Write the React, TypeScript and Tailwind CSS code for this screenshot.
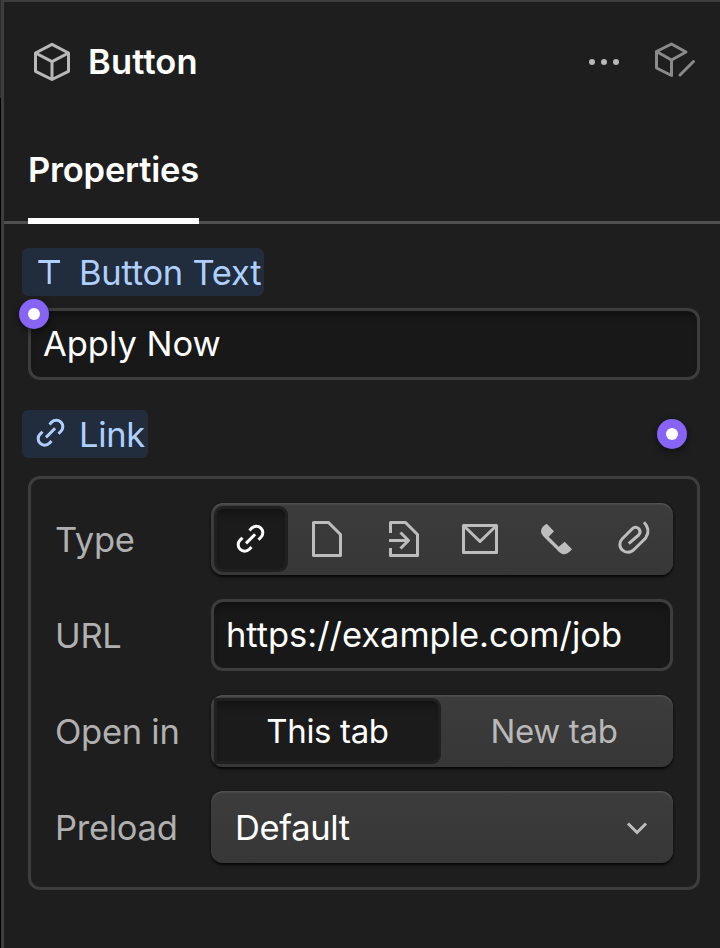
import type { ReactNode } from "react";

const controlClass =
    "h-[72px] w-[462px] rounded-[12px] bg-linear-to-b from-[#3c3c3c] to-[#373737] shadow-[0_1.5px_3px_rgba(0,0,0,0.8),inset_0_1.5px_1.5px_rgba(255,255,255,0.12)]";
const inputClass =
    "block h-[72px] rounded-[12px] border-[3px] border-[#3d3d3d] bg-[#181818] px-3 pb-0.5 tracking-[-0.001em] text-white outline-none shadow-[inset_0_9px_9px_-6px_rgba(0,0,0,0.4)]";
const pressedClass =
    "h-[66px] border-[3px] border-[#202020] bg-[#1b1b1b] text-white shadow-[inset_0_9px_9px_-6px_rgba(0,0,0,0.4)]";

function LinkIcon({ className = "" }: { className?: string }) {
    return (
        <svg className={className} width="29" height="29" viewBox="0 0 29 29" fill="none" stroke="currentColor" strokeWidth="3">
            <path d="M13.5 6.5 15.7 4.1A6.5 6.5 0 0 1 24.9 13.3L22.5 15.7M15.5 22.9 13.3 25.3A6.5 6.5 0 0 1 4.1 16.1L6.5 13.7M10 19.4 19.1 10.3" />
        </svg>
    );
}

function TypeIcon({ children }: { children: ReactNode }) {
    return (
        <button className="flex h-[72px] w-[76px] items-center justify-center">
            <svg width="48" height="48" viewBox="0 0 48 48" fill="none" stroke="currentColor" strokeWidth="3" strokeLinejoin="round">
                {children}
            </svg>
        </button>
    );
}

// 紫のバインディングマーカー
function BindingDot({ className = "" }: { className?: string }) {
    return (
        <span className={`flex size-[30px] items-center justify-center rounded-full bg-[#8764f5] shadow-[0_3px_6px_1px_rgba(0,0,0,0.4)] ${className}`}>
            <span className="size-3 rounded-full bg-white" />
        </span>
    );
}

function Row({ label, children }: { label: string; children: ReactNode }) {
    return (
        <div className="flex items-center">
            <span className="w-[156px] shrink-0 pt-0.5 tracking-[-0.008em]">{label}</span>
            {children}
        </div>
    );
}

export default function App() {
    return (
        <div className="h-[948px] w-[720px] overflow-hidden bg-linear-to-b from-[#2b2b2b] from-[98px] to-black to-[98px] pl-px font-['Inter','Liberation_Sans',sans-serif] text-[34.5px] leading-[48px] tracking-[-0.01em] text-[#b0b0b0]">
            <div className="h-full border-t-2 border-l-[3px] border-[#3d3d3d] bg-[#1e1e1e]">

                {/* ヘッダー */}
                <header className="flex h-[120px] items-center pr-[22px] pl-6">
                    <svg width="48" height="48" viewBox="0 0 48 48" fill="none" stroke="#b8b8b8" strokeWidth="3" strokeLinejoin="round">
                        <path d="M24 6.3 40.5 15V33.3L24 41.5 7.5 33.3V15ZM7.5 15 24 23.7 40.5 15M24 23.7V41.5" />
                    </svg>
                    <h1 className="ml-3 font-semibold tracking-[0.004em] text-white">Button</h1>
                    <svg className="ml-auto" width="36" height="12" viewBox="0 0 36 12" fill="#b8b8b8">
                        <circle cx="6" cy="6" r="3" />
                        <circle cx="18" cy="6" r="3" />
                        <circle cx="30" cy="6" r="3" />
                    </svg>
                    <svg className="ml-7" width="48" height="48" viewBox="0 0 48 48" fill="none" stroke="#8a8a8a" strokeWidth="3" strokeLinejoin="round" strokeLinecap="round">
                        <path d="M21.5 37.5 6.5 30V13.5L21.5 6 36 14 21.5 22ZM6.5 13.5 21.5 22M30 37 43.5 23.5" />
                    </svg>
                </header>

                {/* タブ */}
                <nav className="flex h-[102px] border-b-[3px] border-[#505050] pl-6">
                    <button className="h-[102px] w-[171px] border-b-[6px] border-white text-left font-semibold tracking-[-0.006em] whitespace-nowrap text-white">
                        Properties
                    </button>
                </nav>

                <main className="pt-6 pr-5 pl-6">
                    <div className="-ml-1.5 flex h-12 w-[242px] items-center rounded-md bg-[#212d3c] pl-3.5 tracking-[-0.007em] whitespace-nowrap text-[#aecfff]">
                        <svg width="24" height="26" viewBox="0 0 24 26" fill="none" stroke="currentColor" strokeWidth="3">
                            <path d="M2.3 2.5H24M13.2 2.5V25" />
                        </svg>
                        <span className="ml-[19px] pt-0.5">Button Text</span>
                    </div>
                    <div className="relative mt-3">
                        <input className={`w-full ${inputClass}`} defaultValue="Apply Now" />
                        <BindingDot className="absolute -top-[9px] -left-[9px]" />
                    </div>

                    <div className="mt-[30px] -ml-1.5 flex items-center justify-between pr-[13px]">
                        <div className="flex h-12 w-[126px] items-center rounded-md bg-[#212d3c] pl-3.5 text-[#aecfff]">
                            <LinkIcon className="mb-[3px]" />
                            <span className="ml-3.5 pt-0.5">Link</span>
                        </div>
                        <BindingDot />
                    </div>

                    {/* リンク設定 */}
                    <section className="mt-[18px] flex flex-col gap-6 rounded-[12px] border-[3px] border-[#3d3d3d] p-6">
                        <Row label="Type">
                            <div className={`flex items-center px-[3px] text-[#bdbdbd] ${controlClass}`}>
                                <button className={`mr-px flex w-[74px] shrink-0 items-center justify-center rounded-[9px] ${pressedClass}`}>
                                    <LinkIcon className="mr-px mb-px" />
                                </button>
                                <TypeIcon>
                                    <path d="M10.5 7.5H25.5L37.5 19.5V40.5H10.5Z" />
                                </TypeIcon>
                                <TypeIcon>
                                    <path d="M11.5 18V7.5H26.5L38.5 19.5V40.5H11.5V33M10 25.5H29.5M21.5 17.5 29.5 25.5 21.5 33.5" />
                                </TypeIcon>
                                <TypeIcon>
                                    <path d="M8.5 10.5H41.5V37.5H8.5ZM9.5 11.5 25 26.5 40.5 11.5" />
                                </TypeIcon>
                                <TypeIcon>
                                    <path
                                        d="M15.7 8.7 23 16.3 17.7 21.7 27.7 31.7 33.7 26.7 41 34.3C37.5 38.5 34.5 39.7 32 39.2 29.5 38.5 27.5 36.5 25.5 34.2L15.3 24.2C12.5 21.5 10 19 10 16.5 10 13 12.5 10.5 15.7 8.7Z"
                                        fill="currentColor"
                                        stroke="none"
                                    />
                                </TypeIcon>
                                <TypeIcon>
                                    <path d="M37 7.3C40.3 10.7 43 15.7 39 22.3 38.3 23.3 37 24.7 35.7 26L27.3 34.3C23.7 38.3 18.3 38 15.7 35.3 12 32.3 12 27 15.3 23.7L25.3 13.7C27.3 11.7 30.3 11.7 32 14 33.3 15.7 33.3 18.3 31.7 20L21.7 28.7" />
                                </TypeIcon>
                            </div>
                        </Row>
                        <Row label="URL">
                            <input className={`w-[462px] ${inputClass}`} defaultValue="https://example.com/job" />
                        </Row>
                        <Row label="Open in">
                            <div className={`flex items-center px-[3px] text-[33px] ${controlClass}`}>
                                <button className={`flex w-[227px] items-center justify-center rounded-l-[2px] rounded-r-[9px] pb-px ${pressedClass}`}>
                                    This tab
                                </button>
                                <button className="h-[66px] flex-1 pr-[3px] pb-px text-[#b8b8b8]">New tab</button>
                            </div>
                        </Row>
                        <Row label="Preload">
                            <button className={`flex items-center justify-between pr-6 pl-6 text-white ${controlClass}`}>
                                <span className="pt-0.5">Default</span>
                                <svg width="24" height="24" viewBox="0 0 24 24" fill="none" stroke="#bdbdbd" strokeWidth="3">
                                    <path d="M3 8.5 12 17.5 21 8.5" />
                                </svg>
                            </button>
                        </Row>
                    </section>
                </main>
            </div>
        </div>
    );
}
